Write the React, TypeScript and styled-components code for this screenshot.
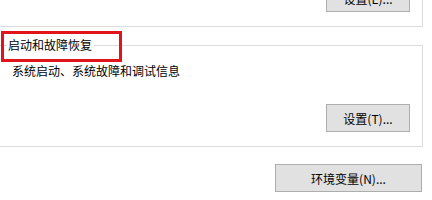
import styled, { createGlobalStyle } from "styled-components"

const GlobalStyle = createGlobalStyle`
  html, body {
    margin: 0;
    padding: 0;
    background: #ffffff;
    overflow: hidden;
  }
  body {
    font-family: "Noto Sans CJK SC", "Liberation Sans", sans-serif;
    font-size: 12px;
    color: #000000;
  }
`

export default function App() {
  return (
    <>
      <GlobalStyle />
      <Page>
        <TopGroup>
          <Button $width={84}>设置(E)...</Button>
        </TopGroup>

        <Group>
          <Legend>
            启动和故障恢复
            <Highlight />
          </Legend>
          <Description>系统启动、系统故障和调试信息</Description>
          <ButtonRow>
            <Button $width={84}>设置(T)...</Button>
          </ButtonRow>
        </Group>

        <Footer>
          <Button $width={147}>环境变量(N)...</Button>
        </Footer>
      </Page>
    </>
  )
}

const Page = styled.div`
  display: flex;
  flex-direction: column;
  width: 426px;
  margin-left: -3px;
  margin-top: -31px;
`

const TopGroup = styled.div`
  display: flex;
  justify-content: flex-end;
  border: 1px solid #dcdcdc;
  padding: 14px 12px 14px 0;
`

const Group = styled.fieldset`
  margin: 11px 0 0 0;
  padding: 0 12px 14px 9px;
  border: 1px solid #dcdcdc;
  min-width: 0;
`

const Legend = styled.legend`
  position: relative;
  padding: 0 2px 0 1px;
  margin-left: 0;
  line-height: 14px;
  font-size: 12px;
`

const Highlight = styled.span`
  position: absolute;
  left: -6px;
  top: -7px;
  width: 121px;
  height: 31px;
  box-sizing: border-box;
  border: 3px solid #e2141b;
  pointer-events: none;
`

const Description = styled.div`
  padding: 11px 0 0 5px;
  line-height: 16px;
`

const ButtonRow = styled.div`
  display: flex;
  justify-content: flex-end;
  margin-top: 25px;
`

const Footer = styled.div`
  display: flex;
  justify-content: flex-end;
  margin-top: 17px;
  padding-right: 1px;
`

const Button = styled.button<{ $width: number }>`
  width: ${(p) => p.$width}px;
  height: 28px;
  box-sizing: border-box;
  padding: 1px 0 0 0;
  margin: 0;
  border: 1px solid #adadad;
  background: #e1e1e1;
  color: #000000;
  font-family: "Noto Sans CJK SC", "Liberation Sans", sans-serif;
  font-size: 12px;
  line-height: 14px;
`
